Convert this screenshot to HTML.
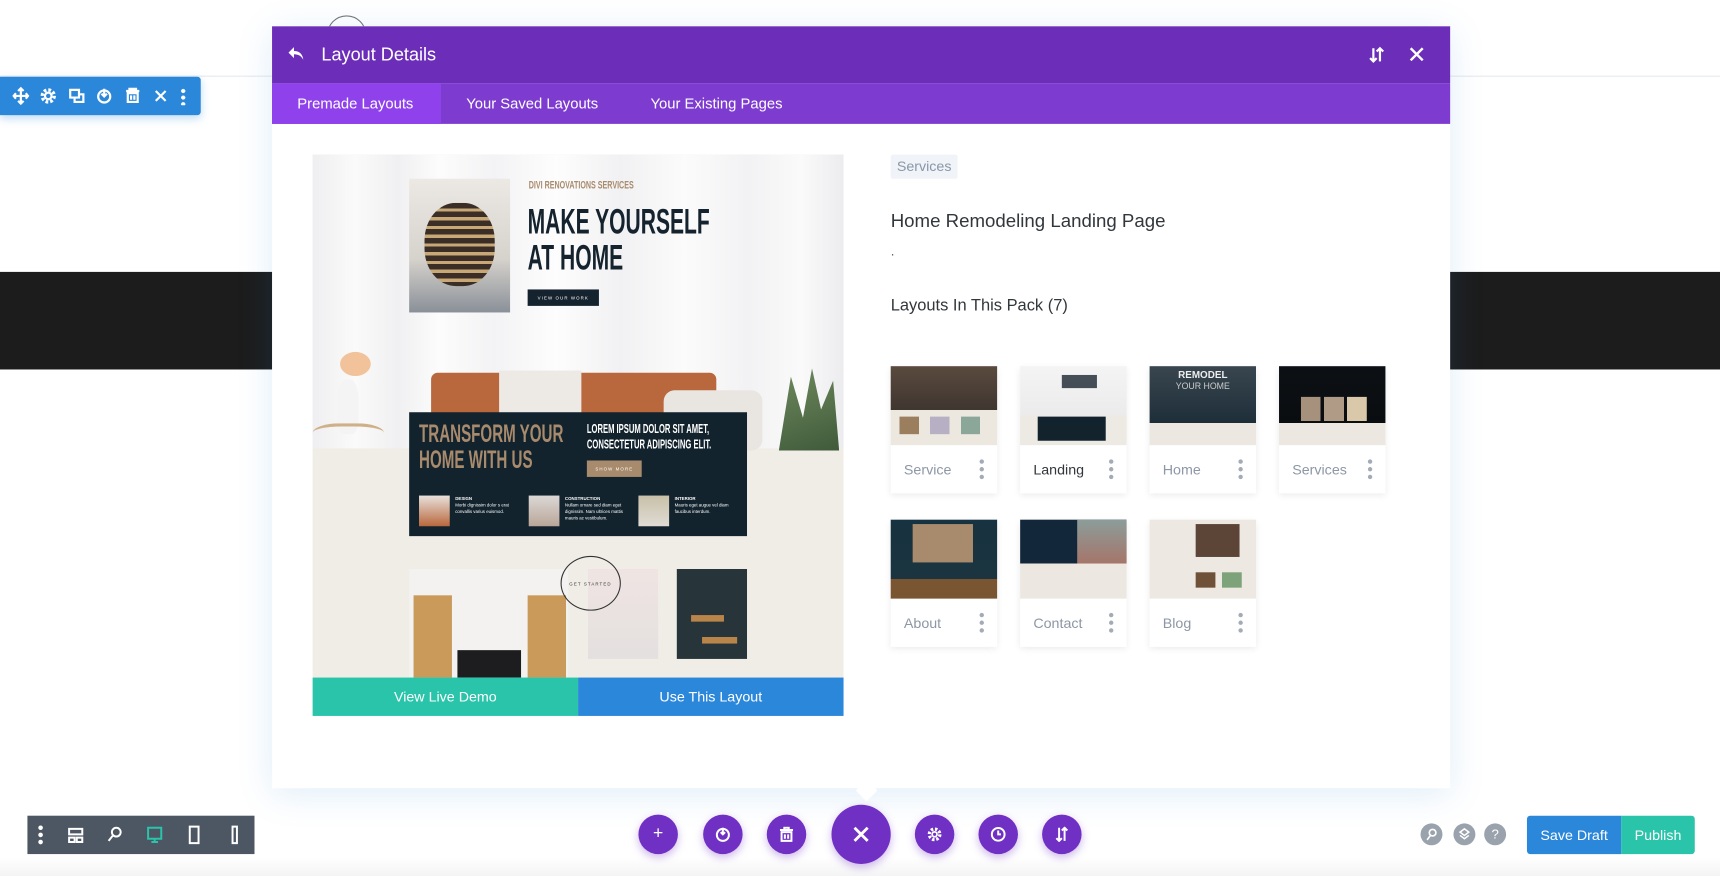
<!DOCTYPE html>
<html><head><meta charset="utf-8">
<style>
*{box-sizing:border-box;margin:0;padding:0}
html,body{width:1720px;height:876px;overflow:hidden;background:#fff;font-family:"Liberation Sans",sans-serif}
#w{position:absolute;left:0;top:0;width:1568px;height:799px;transform:scale(1.09694,1.09637);transform-origin:0 0}
.a{position:absolute}
.circ{border-radius:50%}
.card{position:absolute;width:97px;background:#fff;box-shadow:0 2px 6px rgba(0,0,0,.08)}
.card .im{height:72px;position:relative;overflow:hidden}
.card .lb{height:44px;display:flex;align-items:center;justify-content:space-between;padding:0 12px;font-size:13px;color:#8d97a5}
.dots{width:4px;display:flex;flex-direction:column;gap:3px}
.dots i{display:block;width:4px;height:4px;border-radius:50%;background:#a3abb6}
.cond{font-weight:bold;transform-origin:0 0;white-space:nowrap;font-family:"Liberation Sans",sans-serif}
.pb{position:absolute;border-radius:50%;background:#7030c4;box-shadow:0 3px 8px rgba(112,48,196,.35);color:#fff;display:flex;align-items:center;justify-content:center}
</style></head><body><div id="w">
<div class="a" style="left:0;top:69px;width:1568px;height:1px;background:#e6e9ee"></div>
<div class="a circ" style="left:298px;top:14px;width:36px;height:36px;border:1px solid #777"></div>
<div class="a" style="left:0;top:248px;width:1568px;height:89px;background:#1c1c1c"></div>
<div class="a" style="left:0;top:70px;width:183px;height:35px;background:#2b87da;border-radius:0 3px 3px 0;box-shadow:0 3px 8px rgba(43,135,218,.3)">
<svg width="183" height="35" viewBox="0 0 183 35" fill="none" stroke="#fff" stroke-width="2">
<path d="M19 11v13M12.5 17.5h13M16.5 13l2.5-2.5 2.5 2.5M16.5 22l2.5 2.5 2.5-2.5M14.5 15l-2 2.5 2 2.5M23.5 15l2 2.5-2 2.5"/>
<circle cx="44" cy="17.5" r="3"/><circle cx="44" cy="17.5" r="5.5" stroke-dasharray="2.5 1.8" stroke-width="3"/>
<path d="M64 12h8v7h-8zM68 19v4h8v-7h-4"/>
<circle cx="95" cy="18" r="5.5"/><path d="M95 11v7M92.5 15.5l2.5 2.5 2.5-2.5"/>
<path d="M115 13h12M118 13v-2h6v2M116.5 15h9v8h-9zM119.5 17v4M122.5 17v4"/>
<path d="M142 13l9 9M151 13l-9 9"/>
</svg>
<div class="a" style="left:165px;top:10px;width:4px;height:16px;background:radial-gradient(circle,#fff 1.8px,transparent 2px) 0 0/4px 6px"></div>
</div>
<div class="a" style="left:248px;top:24px;width:1074px;height:695px;background:#fff;box-shadow:0 5px 30px rgba(43,135,218,.15)"></div>
<div class="a" style="left:783px;top:714px;width:14px;height:14px;background:#fff;transform:rotate(45deg)"></div>
<div class="a" style="left:248px;top:24px;width:1074px;height:52px;background:#6c2eb9;color:#fff">
<svg class="a" style="left:14px;top:18px" width="16" height="14" viewBox="0 0 16 14"><path d="M6 1L1 6l5 5V7.5c4 0 6.5 1.5 8.5 5C14 8 11.5 4.5 6 4.5z" fill="#fff"/></svg>
<div class="a" style="left:45px;top:17px;font-size:16.5px">Layout Details</div>
<svg class="a" style="left:1000px;top:18px" width="14" height="16" viewBox="0 0 14 16" stroke="#fff" stroke-width="2" fill="none"><path d="M4 2v12M1 11l3 3 3-3M10 14V2M7 5l3-3 3 3"/></svg>
<svg class="a" style="left:1037px;top:19px" width="13" height="13" viewBox="0 0 13 13" stroke="#fff" stroke-width="2.2"><path d="M1 1l11 11M12 1L1 12"/></svg>
</div>
<div class="a" style="left:248px;top:76px;width:1074px;height:37px;background:#7e3bd0;color:#fff;font-size:13.5px">
<div class="a" style="left:0;top:0;width:154px;height:37px;background:#8f42ec"></div>
<div class="a" style="left:23px;top:11px">Premade Layouts</div>
<div class="a" style="left:177px;top:11px">Your Saved Layouts</div>
<div class="a" style="left:345px;top:11px">Your Existing Pages</div>
</div>
<!-- preview -->
<div class="a" style="left:285px;top:141px;width:484px;height:477px;overflow:hidden;background:#f0ede7">
<div class="a" style="left:0;top:0;width:484px;height:268px;background:linear-gradient(90deg,#efeff1 0%,#fafafa 8%,#f0f0f2 16%,#fcfcfc 24%,#f3f3f5 34%,#fdfdfd 46%,#f1f1f3 58%,#fbfbfb 70%,#f2f2f4 82%,#fafafa 92%,#ececef 100%)"></div>
<div class="a" style="left:108px;top:199px;width:260px;height:70px;background:#b9673c;border-radius:6px 6px 0 0"></div>
<div class="a" style="left:170px;top:197px;width:75px;height:72px;background:#ede9e5"></div>
<div class="a" style="left:320px;top:215px;width:90px;height:55px;background:#e9e6e2;border-radius:10px"></div>
<div class="a" style="left:425px;top:195px;width:55px;height:75px;background:linear-gradient(160deg,#6f8a5e,#3f5a3a);clip-path:polygon(0 100%,20% 10%,40% 60%,55% 0,70% 50%,90% 15%,100% 100%)"></div>
<div class="a" style="left:25px;top:180px;width:28px;height:22px;background:#f2c39a;border-radius:50%"></div>
<div class="a" style="left:22px;top:205px;width:20px;height:50px;background:#f4f4f4;border-radius:40% 40% 30% 30%"></div>
<div class="a" style="left:0;top:245px;width:65px;height:22px;border-top:3px solid #cfb088;border-radius:40%"></div>
<div class="a" style="left:88px;top:22px;width:92px;height:122px;background:linear-gradient(180deg,#ece9e5,#d6d2cc 60%,#8a9098)"></div>
<div class="a" style="left:102px;top:44px;width:64px;height:76px;background:repeating-linear-gradient(180deg,#3a2e26 0 5px,#c7a876 5px 8px);border-radius:45%"></div>
<div class="a cond" style="left:197px;top:23px;font-size:10px;color:#a88a6c;transform:scaleX(.65)">DIVI RENOVATIONS SERVICES</div>
<div class="a cond" style="left:196px;top:45px;font-size:32px;line-height:33px;color:#15232e;transform:scaleX(.6)">MAKE YOURSELF<br>AT HOME</div>
<div class="a" style="left:196px;top:123px;width:65px;height:15px;background:#15232e;color:#fff;font-size:4px;letter-spacing:1px;text-align:center;line-height:15px">VIEW OUR WORK</div>
<div class="a" style="left:88px;top:235px;width:308px;height:113px;background:#12232e"></div>
<div class="a cond" style="left:97px;top:242px;font-size:23px;line-height:24px;color:#a88a6c;transform:scaleX(.6)">TRANSFORM YOUR<br>HOME WITH US</div>
<div class="a cond" style="left:250px;top:243px;font-size:12px;line-height:14px;color:#fff;transform:scaleX(.58)">LOREM IPSUM DOLOR SIT AMET,<br>CONSECTETUR ADIPISCING ELIT.</div>
<div class="a" style="left:250px;top:279px;width:50px;height:15px;background:#a88a6c;color:#fff;font-size:4px;text-align:center;line-height:15px;letter-spacing:1px">SHOW MORE</div>
<div class="a" style="left:97px;top:311px;width:28px;height:28px;background:linear-gradient(#e8e2dc,#b9673c)"></div>
<div class="a" style="left:197px;top:311px;width:28px;height:28px;background:linear-gradient(#dcd8d6,#b9a698)"></div>
<div class="a" style="left:297px;top:311px;width:28px;height:28px;background:linear-gradient(#c8c0a8,#e0dcd5)"></div>
<div class="a" style="left:130px;top:311px;font-size:4px;color:#fff;line-height:6px"><b>DESIGN</b><br>Morbi dignissim dolor s erat<br>convallis varius euismod.</div>
<div class="a" style="left:230px;top:311px;font-size:4px;color:#fff;line-height:6px"><b>CONSTRUCTION</b><br>Nullam ornare sed diam eget<br>dignissim. Nam ultrices mattis<br>mauris ac vestibulum.</div>
<div class="a" style="left:330px;top:311px;font-size:4px;color:#fff;line-height:6px"><b>INTERIOR</b><br>Mauris eget augue vel diam<br>faucibus interdum.</div>
<div class="a" style="left:88px;top:378px;width:145px;height:99px;background:#f3f2f0"></div>
<div class="a" style="left:92px;top:402px;width:35px;height:75px;background:#c99a5a"></div>
<div class="a" style="left:196px;top:402px;width:35px;height:75px;background:#c99a5a"></div>
<div class="a" style="left:132px;top:452px;width:58px;height:25px;background:#1d1d1f"></div>
<div class="a" style="left:251px;top:378px;width:64px;height:82px;background:linear-gradient(#efe4e2,#e4e0e0)"></div>
<div class="a" style="left:332px;top:378px;width:64px;height:82px;background:#27343a"></div>
<div class="a" style="left:345px;top:420px;width:30px;height:6px;background:#b8844a"></div>
<div class="a" style="left:355px;top:440px;width:32px;height:6px;background:#b8844a"></div>
<div class="a circ" style="left:226px;top:366px;width:55px;height:50px;border:1px solid #333"></div>
<div class="a" style="left:234px;top:389px;font-size:4px;letter-spacing:1px;color:#333">GET STARTED</div>
</div>
<div class="a" style="left:285px;top:618px;width:242px;height:35px;background:#29c4a9;color:#fff;font-size:13px;text-align:center;line-height:35px">View Live Demo</div>
<div class="a" style="left:527px;top:618px;width:242px;height:35px;background:#2b87da;color:#fff;font-size:13px;text-align:center;line-height:35px">Use This Layout</div>
<!-- right -->
<div class="a" style="left:812px;top:141px;width:61px;height:22px;background:#f0f3f7;border-radius:2px;color:#8a97a8;font-size:13px;text-align:center;line-height:22px">Services</div>
<div class="a" style="left:812px;top:192px;font-size:17px;color:#32373c">Home Remodeling Landing Page</div>
<div class="a" style="left:812px;top:222px;font-size:12px;color:#555">.</div>
<div class="a" style="left:812px;top:270px;font-size:15px;color:#32373c">Layouts In This Pack (7)</div>
<div class="card" style="left:812px;top:334px"><div class="im" style="background:linear-gradient(#5a4a3e 0,#3f3630 40px,#ece7df 40px)"><div class="a" style="left:8px;top:46px;width:80px;height:16px;background:linear-gradient(90deg,#9b7e5e 0 22%,transparent 22% 35%,#b7b0c5 35% 57%,transparent 57% 70%,#8aa79a 70% 92%,transparent 92%)"></div></div><div class="lb">Service<div class="dots"><i></i><i></i><i></i></div></div></div>
<div class="card" style="left:930px;top:334px"><div class="im" style="background:linear-gradient(#f4f4f5 0,#ecebec 45px,#ede9e3 45px)"><div class="a" style="left:16px;top:46px;width:62px;height:22px;background:#12232e"></div><div class="a" style="left:38px;top:8px;width:32px;height:12px;background:#1a2631;opacity:.8"></div></div><div class="lb" style="color:#32373c">Landing<div class="dots"><i></i><i></i><i></i></div></div></div>
<div class="card" style="left:1048px;top:334px"><div class="im" style="background:linear-gradient(#394650 0,#1e2e38 52px,#ece8e1 52px)"><div class="a" style="left:0;top:3px;width:97px;text-align:center;font-size:9px;font-weight:bold;color:#eee">REMODEL</div><div class="a" style="left:0;top:14px;width:97px;text-align:center;font-size:8px;color:#ccc">YOUR HOME</div></div><div class="lb">Home<div class="dots"><i></i><i></i><i></i></div></div></div>
<div class="card" style="left:1166px;top:334px"><div class="im" style="background:linear-gradient(#0c1014 0,#0a0d10 52px,#ece8e1 52px)"><div class="a" style="left:20px;top:28px;width:60px;height:22px;background:linear-gradient(90deg,#a6927c 0 30%,transparent 30% 35%,#b09c86 35% 65%,transparent 65% 70%,#d9c8a9 70%)"></div></div><div class="lb">Services<div class="dots"><i></i><i></i><i></i></div></div></div>
<div class="card" style="left:812px;top:474px"><div class="im" style="background:linear-gradient(#173240 0,#1b3440 54px,#7a5532 54px)"><div class="a" style="left:20px;top:4px;width:55px;height:35px;background:#a88a6c"></div></div><div class="lb">About<div class="dots"><i></i><i></i><i></i></div></div></div>
<div class="card" style="left:930px;top:474px"><div class="im" style="background:linear-gradient(#12283a 0,#12283a 40px,#ece8e1 40px)"><div class="a" style="left:52px;top:0;width:45px;height:40px;background:linear-gradient(#8b9d9a,#a5756a)"></div></div><div class="lb">Contact<div class="dots"><i></i><i></i><i></i></div></div></div>
<div class="card" style="left:1048px;top:474px"><div class="im" style="background:#ede9e2"><div class="a" style="left:42px;top:4px;width:40px;height:30px;background:#5c4536"></div><div class="a" style="left:42px;top:48px;width:18px;height:14px;background:#6e5138"></div><div class="a" style="left:66px;top:48px;width:18px;height:14px;background:#7ea279"></div></div><div class="lb">Blog<div class="dots"><i></i><i></i><i></i></div></div></div>
<!-- bottom -->
<div class="a" style="left:0;top:782px;width:1568px;height:17px;background:linear-gradient(#fff,#f4f4f5)"></div>
<div class="a" style="left:25px;top:744px;width:207px;height:35px;background:#4d5764">
<svg width="207" height="35" viewBox="0 0 207 35" fill="none" stroke="#fff" stroke-width="1.8">
<circle cx="12" cy="11" r="1.2" fill="#fff"/><circle cx="12" cy="17.5" r="1.2" fill="#fff"/><circle cx="12" cy="24" r="1.2" fill="#fff"/>
<path d="M38 12h12v5H38zM38 20h5v4h-5zM45 20h5v4h-5z"/>
<circle cx="81" cy="15" r="4"/><path d="M78 18l-4 5"/>
<path d="M110 11h12v10h-12zM116 21v3M113 24h6" stroke="#29c4a9"/>
<path d="M148 10h8v15h-8z"/><path d="M187 10h4v15h-4z"/>
</svg></div>
<div class="pb" style="left:582px;top:743px;width:36px;height:36px;font-size:16px">+</div>
<div class="pb" style="left:641px;top:743px;width:36px;height:36px"><svg width="14" height="14" viewBox="0 0 14 14" fill="none" stroke="#fff" stroke-width="1.8"><circle cx="7" cy="7.5" r="5.5"/><path d="M7 1v6M5 5l2 2 2-2"/></svg></div>
<div class="pb" style="left:699px;top:743px;width:36px;height:36px"><svg width="12" height="14" viewBox="0 0 12 14" fill="none" stroke="#fff" stroke-width="1.8"><path d="M0 3h12M4 3V1h4v2M1.5 5h9v8h-9zM4.5 7v4M7.5 7v4"/></svg></div>
<div class="pb" style="left:758px;top:734px;width:54px;height:54px"><svg width="16" height="16" viewBox="0 0 16 16" stroke="#fff" stroke-width="2.6"><path d="M2 2l12 12M14 2L2 14"/></svg></div>
<div class="pb" style="left:834px;top:743px;width:36px;height:36px"><svg width="14" height="14" viewBox="0 0 14 14" fill="none" stroke="#fff"><circle cx="7" cy="7" r="2.2" stroke-width="1.6"/><circle cx="7" cy="7" r="4.8" stroke-width="3" stroke-dasharray="2.2 1.6"/></svg></div>
<div class="pb" style="left:892px;top:743px;width:36px;height:36px"><svg width="14" height="14" viewBox="0 0 14 14" fill="none" stroke="#fff" stroke-width="1.8"><circle cx="7" cy="7" r="5.8"/><path d="M7 3.5V7h2.5"/></svg></div>
<div class="pb" style="left:950px;top:743px;width:36px;height:36px"><svg width="12" height="14" viewBox="0 0 12 14" fill="none" stroke="#fff" stroke-width="1.8"><path d="M3.5 1v12M1 10.5l2.5 2.5 2.5-2.5M8.5 13V1M6 3.5L8.5 1 11 3.5"/></svg></div>
<div class="a circ" style="left:1295px;top:751px;width:20px;height:20px;background:#9aa3ad"><svg width="20" height="20" viewBox="0 0 20 20" fill="none" stroke="#fff" stroke-width="1.5"><circle cx="11" cy="8.5" r="3"/><path d="M9 11l-3 4"/></svg></div>
<div class="a circ" style="left:1325px;top:751px;width:20px;height:20px;background:#9aa3ad"><svg width="20" height="20" viewBox="0 0 20 20" fill="none" stroke="#fff" stroke-width="1.4"><path d="M10 5l4 3-4 3-4-3zM6 11l4 3 4-3"/></svg></div>
<div class="a circ" style="left:1353px;top:751px;width:20px;height:20px;background:#9aa3ad;color:#fff;font-size:12px;text-align:center;line-height:20px">?</div>
<div class="a" style="left:1392px;top:744px;width:86px;height:35px;background:#2b87da;color:#fff;font-size:13px;text-align:center;line-height:35px;border-radius:3px 0 0 3px">Save Draft</div>
<div class="a" style="left:1478px;top:744px;width:67px;height:35px;background:#29c4a9;color:#fff;font-size:13px;text-align:center;line-height:35px;border-radius:0 3px 3px 0">Publish</div>
</div></body></html>
